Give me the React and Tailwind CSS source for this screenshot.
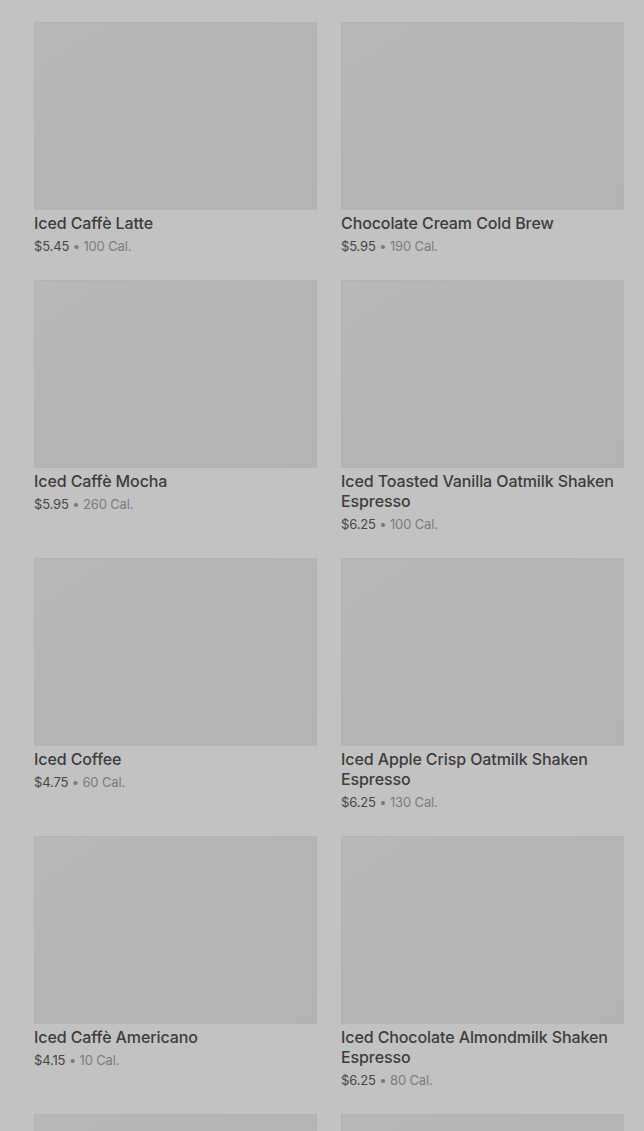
import React from "react";

const drinks = [
  { name: "Iced Caffè Latte", price: "$5.45", cal: "100 Cal." },
  { name: "Chocolate Cream Cold Brew", price: "$5.95", cal: "190 Cal." },
  { name: "Iced Caffè Mocha", price: "$5.95", cal: "260 Cal." },
  { name: "Iced Toasted Vanilla Oatmilk Shaken Espresso", price: "$6.25", cal: "100 Cal." },
  { name: "Iced Coffee", price: "$4.75", cal: "60 Cal." },
  { name: "Iced Apple Crisp Oatmilk Shaken Espresso", price: "$6.25", cal: "130 Cal." },
  { name: "Iced Caffè Americano", price: "$4.15", cal: "10 Cal." },
  { name: "Iced Chocolate Almondmilk Shaken Espresso", price: "$6.25", cal: "80 Cal." },
  { name: "Iced Brown Sugar Oatmilk Shaken Espresso", price: "$6.25", cal: "120 Cal." },
  { name: "Iced White Chocolate Mocha", price: "$5.95", cal: "420 Cal." },
];

const DrinkCard = ({ drink }) => {
  return (
    <div className="flex flex-col">
      <div className="h-[188px] w-full bg-gradient-to-br from-[#b8b8b8] via-[#b4b4b4] to-[#b3b3b3] border border-[#b2b2b2]" />
      <div className="pt-[3px] text-[16px] leading-5 font-medium text-[#3d3d3d] tracking-[-0.1px]">
        {drink.name}
      </div>
      <div className="mt-[3px] text-[13px] leading-5 text-[#474747] tracking-[-0.15px]">
        {drink.price}
        <span className="text-[#7c7c7c]"> • {drink.cal}</span>
      </div>
    </div>
  );
};

export default function App() {
  return (
    <div
      className="h-screen overflow-hidden bg-[#c2c2c2] pt-[22px] pl-[34px] pr-[20px]"
      style={{ fontFamily: "Inter, 'Noto Sans', sans-serif" }}
    >
      <div className="grid grid-cols-2 gap-x-[24px] gap-y-[24px]">
        {drinks.map((drink) => (
          <DrinkCard key={drink.name} drink={drink} />
        ))}
      </div>
    </div>
  );
}
